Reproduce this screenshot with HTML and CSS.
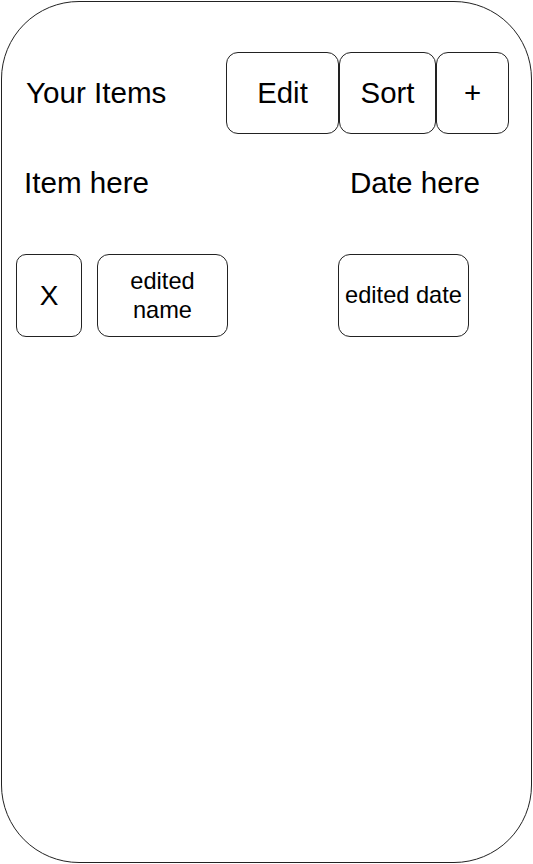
FILE: index.html
```html
<!DOCTYPE html>
<html lang="en">
<head>
<meta charset="utf-8">
<title>Your Items</title>
<link rel="stylesheet" href="styles.css">
</head>
<body>
<div class="frame">
  <header class="top">
    <h1 class="title">Your Items</h1>
    <div class="actions">
      <button class="btn btn-edit">Edit</button>
      <button class="btn btn-sort">Sort</button>
      <button class="btn btn-add">+</button>
    </div>
  </header>
  <div class="list-head">
    <span class="label">Item here</span>
    <span class="label">Date here</span>
  </div>
  <div class="row">
    <button class="box box-x">X</button>
    <div class="box box-name">edited<br>name</div>
    <div class="box box-date">edited date</div>
  </div>
</div>
</body>
</html>
```
FILE: styles.css
```css
* { box-sizing: border-box; }
html, body { margin: 0; padding: 0; background: #fff; }
body {
  font-family: "Liberation Sans", Arial, Helvetica, sans-serif;
  color: #000;
}
.frame {
  margin: 1px 0 0 1px;
  width: 531px;
  height: 862px;
  border: 1px solid #222;
  border-radius: 78px;
  background: #fff;
}
.top {
  display: flex;
  justify-content: space-between;
  align-items: center;
  margin-top: 50px;
  padding: 0 22px 0 24px;
  height: 82px;
}
.title {
  margin: 0;
  font-size: 29.6px;
  font-weight: normal;
  line-height: 34px;
}
.actions {
  display: flex;
  gap: 0;
}
.btn {
  font-family: inherit;
  font-size: 29.4px;
  color: #000;
  background: #fff;
  border: 1px solid #222;
  border-radius: 12px;
  height: 82px;
  padding: 0;
  margin: 0;
}
.btn-edit { width: 113px; }
.btn-sort { width: 97px; }
.btn-add { width: 73px; }
.list-head {
  display: grid;
  grid-template-columns: 326px auto;
  padding-left: 22px;
  margin-top: 32px;
}
.label {
  font-size: 29.6px;
  line-height: 34px;
}
.row {
  display: flex;
  align-items: flex-start;
  margin-top: 54px;
  padding-left: 14px;
}
.box {
  font-family: inherit;
  color: #000;
  background: #fff;
  border: 1px solid #222;
  border-radius: 12px;
  height: 83px;
  display: flex;
  align-items: center;
  justify-content: center;
  text-align: center;
  font-size: 23.6px;
  line-height: 29px;
  padding: 0;
  margin: 0;
}
.box-x {
  width: 66px;
  font-size: 28px;
  border-radius: 10px;
}
.box-name {
  width: 131px;
  margin-left: 15px;
}
.box-date {
  width: 131px;
  margin-left: 110px;
}
```
